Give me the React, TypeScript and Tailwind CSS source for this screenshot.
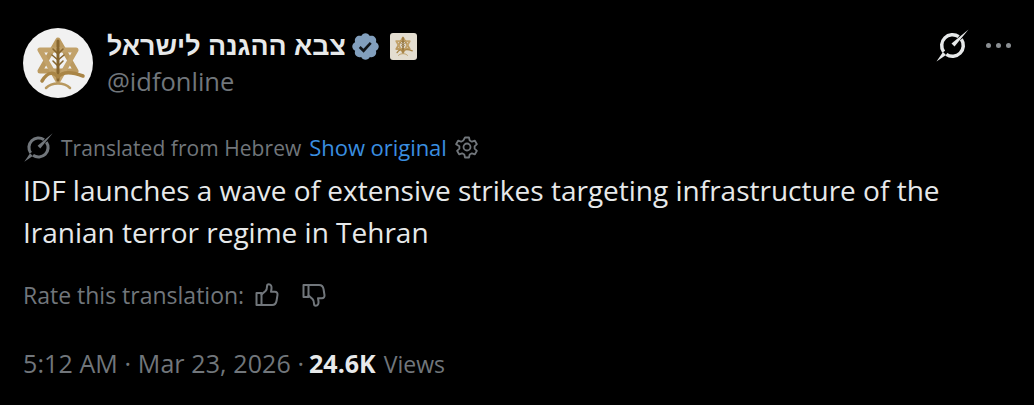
const font = "[font-family:'Open_Sans','Noto_Sans',sans-serif]";

function Emblem({ className }: { className: string }) {
  return (
    <svg viewBox="0 0 70 70" className={className}>
      <g fill="none" strokeLinejoin="round" strokeLinecap="round">
        <path d="M35 12 L53 43 L17 43 Z" strokeWidth="5" stroke="#bb9a60" />
        <path d="M17 22 L53 22 L35 53 Z" strokeWidth="5" stroke="#c2a26a" />
        <path d="M35 13 L35 52" strokeWidth="3" stroke="#86652e" />
        <path d="M35 26 L40 21 M35 32 L41 27 M35 38 L40 33 M35 26 L30 21 M35 32 L29 27 M35 38 L30 33" strokeWidth="1.600" stroke="#86652e" />
        <path d="M19 53 C25 43 31 44 35 49 C39 44 47 43 60 48" strokeWidth="3.500" stroke="#a98546" />
        <path d="M23 60 C29 54 41 54 47 60" strokeWidth="2.500" stroke="#b8985e" />
      </g>
    </svg>
  );
}

function Logo({ className }: { className: string }) {
  return (
    <svg viewBox="0 0 35 35" className={className} fill="none">
      <path d="M23.690 8.650 A10.800 10.800 0 0 0 8.650 23.690" stroke="currentColor" strokeWidth="3.500" />
      <path d="M11.310 26.350 A10.800 10.800 0 0 0 26.350 11.310" stroke="currentColor" strokeWidth="3.500" />
      <path d="M33.500 1.500 L19.500 18.500 L16.500 15.500 Z" fill="currentColor" />
      <path d="M1.500 33.500 L8 24 L11 27 Z" fill="currentColor" />
    </svg>
  );
}

function ThumbUp({ className }: { className: string }) {
  return (
    <svg viewBox="0 0 24 24" className={className} fill="none" stroke="currentColor" strokeWidth="2" strokeLinejoin="round" strokeLinecap="round">
      <path d="M1.500 10h5v12h-5z" />
      <path d="M6.500 11.500 10.500 8c1-1 1.500-2.500 1.500-4.500 0-1.500.6-2.300 1.800-2.300 2 0 3 2 2.700 4.300l-.5 3.300h4c1.700 0 2.700 1.200 2.500 3l-.9 5.700c-.4 2.800-2 4.500-4.500 4.500H6.500" />
    </svg>
  );
}

export default function App() {
  return (
    <div className={`w-[1034px] h-[405px] bg-black overflow-hidden pl-[23px] pt-[28px] ${font}`}>
      <div className="flex items-start">
        <div className="w-[70px] h-[70px] rounded-full bg-[#f1f1f1] shrink-0 flex items-center justify-center">
          <Emblem className="w-[70px] h-[70px]" />
        </div>
        <div className="ml-[14px] flex flex-col">
          <div className="flex items-center h-[36px]">
            <span dir="rtl" className="text-[26.800px] font-bold text-[#e7e9ea] leading-[36px] [font-family:'Liberation_Sans','Noto_Sans',sans-serif]">
              צבא ההגנה לישראל
            </span>
            <svg viewBox="0 0 24 24" className="w-[31px] h-[31px] ml-[4px]">
              <path fill="#829fbd" d="M22.250 12c0-1.430-.880-2.670-2.190-3.340.460-1.390.200-2.900-.810-3.910s-2.520-1.270-3.910-.810c-.660-1.310-1.910-2.190-3.340-2.190s-2.670.880-3.330 2.190c-1.400-.460-2.910-.200-3.920.810s-1.260 2.520-.800 3.910c-1.310.670-2.200 1.910-2.200 3.340s.890 2.670 2.200 3.340c-.460 1.390-.210 2.900.800 3.910s2.520 1.260 3.910.810c.670 1.310 1.910 2.190 3.340 2.190s2.680-.880 3.340-2.190c1.390.450 2.900.200 3.910-.810s1.270-2.520.810-3.910c1.310-.670 2.190-1.910 2.190-3.340z" />
              <path fill="#101418" d="m10.540 16.840-3.740-3.740 1.410-1.540 2.230 2.230 4.890-5.330 1.470 1.360z" />
            </svg>
            <div className="ml-[9px] w-[27px] h-[27px] rounded-[3px] bg-[#e3ddd0] flex items-center justify-center">
              <Emblem className="w-[26px] h-[26px]" />
            </div>
          </div>
          <div className="text-[25.500px] leading-[30px] text-[#71767b] mt-[2px]">@idfonline</div>
        </div>
        <div className="ml-auto mr-[23px] flex items-center h-[35px]">
          <Logo className="w-[35px] h-[35px] text-[#e7e9ea]" />
          <div className="ml-[16px] flex gap-[4.500px]">
            <span className="w-[5.500px] h-[5.500px] rounded-full bg-[#8b8f93]" />
            <span className="w-[5.500px] h-[5.500px] rounded-full bg-[#8b8f93]" />
            <span className="w-[5.500px] h-[5.500px] rounded-full bg-[#8b8f93]" />
          </div>
        </div>
      </div>
      <div className="mt-[34px] flex items-center h-[30px]">
        <Logo className="w-[31px] h-[31px] text-[#71767b]" />
        <div className="flex items-baseline leading-[30px]">
          <span className="ml-[7px] text-[21px] tracking-[0.05px] text-[#71767b]">Translated from Hebrew</span>
          <span className="ml-[8px] text-[22px] tracking-[-0.050px] text-[#3a8fe0]">Show original</span>
        </div>
        <svg viewBox="0 0 24 24" className="w-[24px] h-[24px] ml-[8px] text-[#71767b]" fill="none" stroke="currentColor" strokeWidth="1.800" strokeLinejoin="round">
          <path d="M10 2.500h4l.7 3 2.200 1.200 3-1 2 3.500-2.300 2.100v2.400l2.300 2.100-2 3.500-3-1-2.200 1.200-.7 3h-4l-.7-3-2.200-1.200-3 1-2-3.500 2.300-2.100v-2.400L1.100 9.200l2-3.500 3 1 2.200-1.200z" />
          <circle cx="12" cy="12" r="3.500" />
        </svg>
      </div>
      <div className="mt-[7px] text-[28px] leading-[42px] text-[#e7e9ea] w-[950px]">
        IDF launches a wave of extensive strikes targeting infrastructure of the Iranian terror regime in Tehran
      </div>
      <div className="mt-[27px] flex items-center h-[30px] text-[23px] text-[#71767b]">
        <span>Rate this translation:</span>
        <ThumbUp className="w-[24px] h-[24px] ml-[11px] -mt-[1px]" />
        <ThumbUp className="w-[24px] h-[24px] ml-[23px] -mt-[1px] rotate-180 -scale-x-100" />
      </div>
      <div className="mt-[35px] flex items-baseline h-[30px] text-[#71767b]">
        <span className="text-[25px] tracking-[0.1px]">5:12 AM · Mar 23, 2026 ·</span>
        <span className="ml-[5px] text-[25px] font-bold text-[#e7e9ea]">24.6K</span>
        <span className="ml-[8px] text-[23px]">Views</span>
      </div>
    </div>
  );
}
